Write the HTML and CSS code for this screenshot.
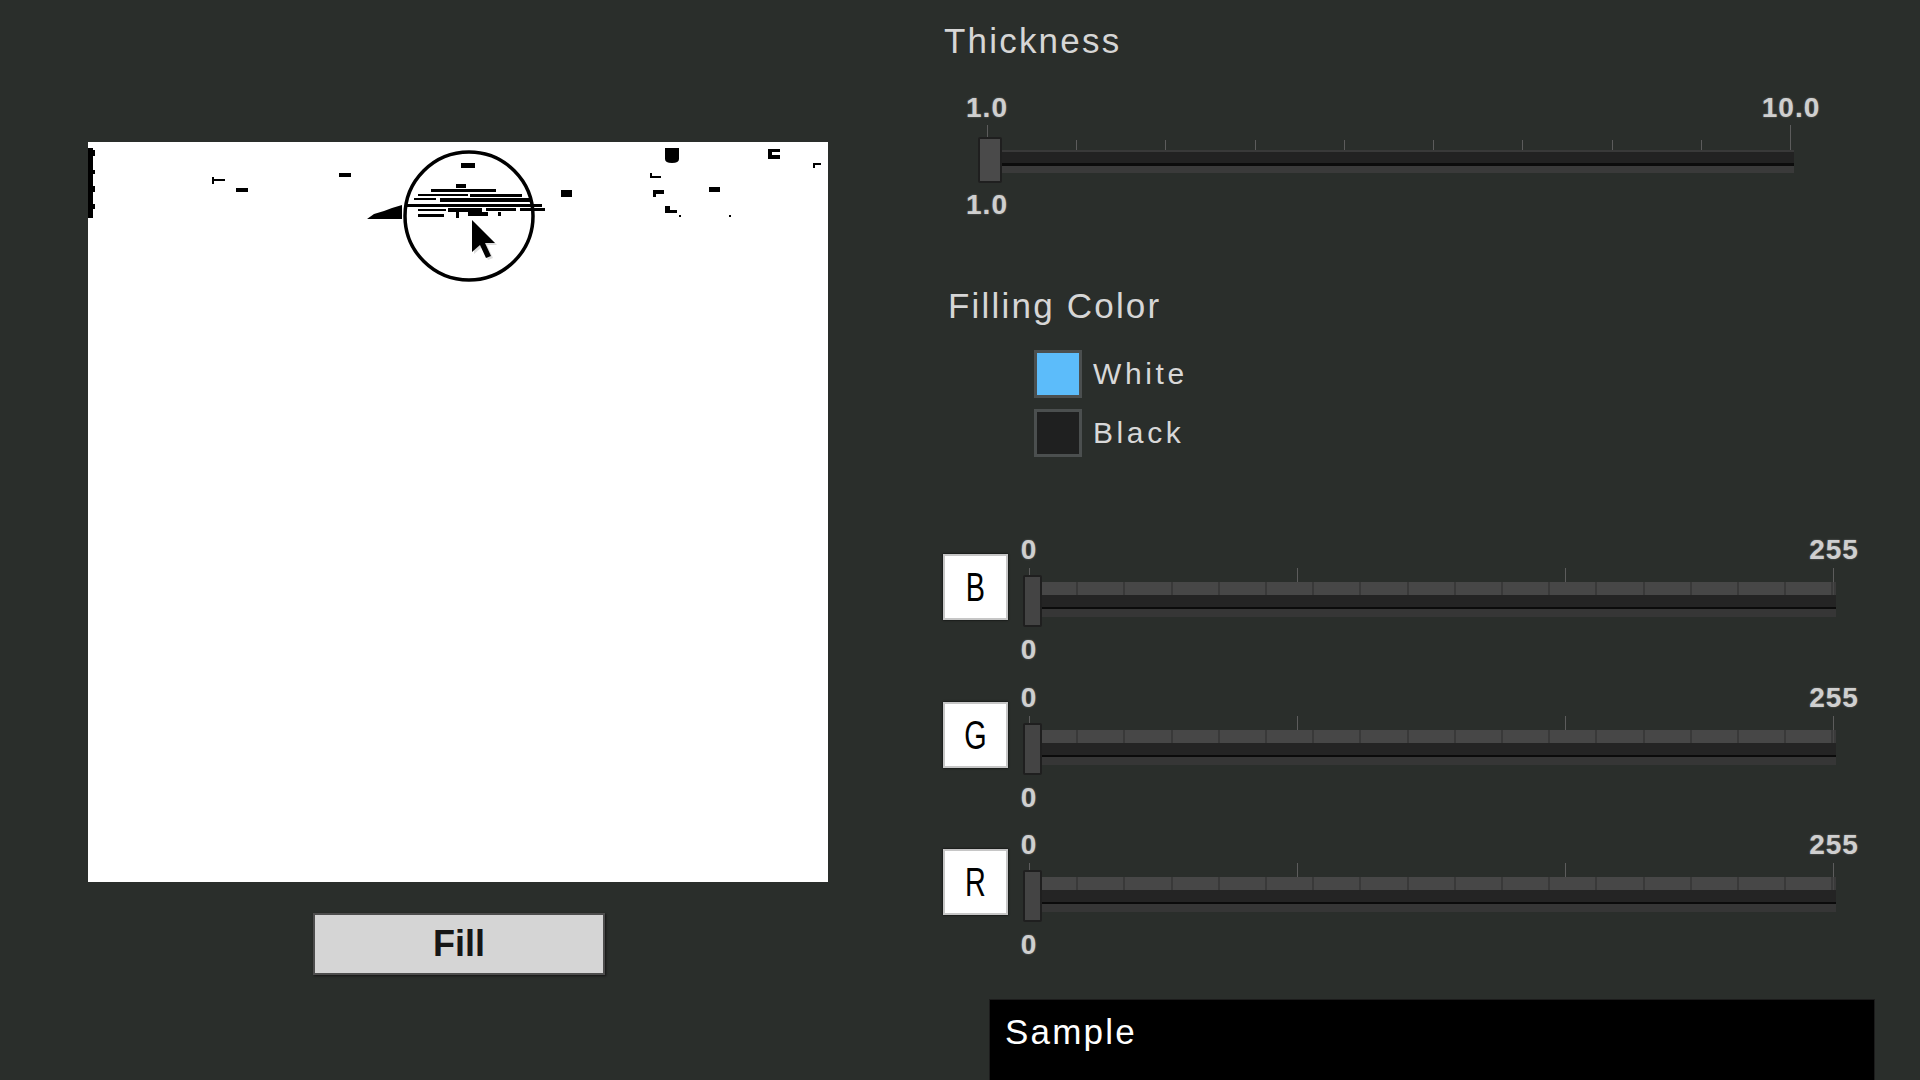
FILE: index.html
```html
<!DOCTYPE html>
<html>
<head>
<meta charset="utf-8">
<title>Fill</title>
<link rel="stylesheet" href="styles.css">
</head>
<body>
<div class="app">
  <section class="left">
    <div class="canvas">
      <svg width="740" height="740" viewBox="0 0 740 740">
        <g fill="#000">
          <rect x="0" y="6" width="5" height="70"/>
          <rect x="5" y="8" width="2" height="6"/>
          <rect x="5" y="28" width="2" height="4"/>
          <rect x="5" y="44" width="2" height="6"/>
          <rect x="5" y="62" width="2" height="5"/>
          <rect x="124" y="35" width="2" height="7"/>
          <rect x="126" y="37" width="11" height="2"/>
          <rect x="148" y="46" width="12" height="4"/>
          <rect x="251" y="31" width="12" height="4"/>
          <rect x="373" y="21" width="14" height="5"/>
          <rect x="368" y="42" width="10" height="4"/>
          <rect x="343" y="47" width="65" height="3"/>
          <rect x="330" y="52" width="50" height="2"/>
          <rect x="382" y="52" width="52" height="3"/>
          <rect x="326" y="56" width="22" height="2"/>
          <rect x="352" y="56" width="92" height="4"/>
          <rect x="318" y="62" width="136" height="3"/>
          <polygon points="279,77 286,72 296,69 304,66 314,63 314,77"/>
          <rect x="330" y="67" width="28" height="2"/>
          <rect x="360" y="66" width="34" height="4"/>
          <rect x="398" y="66" width="30" height="3"/>
          <rect x="330" y="72" width="26" height="3"/>
          <rect x="368" y="70" width="3" height="6"/>
          <rect x="380" y="70" width="20" height="4"/>
          <rect x="410" y="70" width="3" height="4"/>
          <rect x="432" y="66" width="25" height="3"/>
          <rect x="473" y="48" width="11" height="7"/>
          <path d="M577 6 H591 V17 Q591 21 584 21 Q577 21 577 17 Z"/>
          <rect x="680" y="7" width="12" height="10"/>
          <rect x="562" y="31" width="2" height="4"/>
          <rect x="562" y="34" width="11" height="2"/>
          <rect x="565" y="48" width="11" height="4"/>
          <rect x="565" y="48" width="3" height="7"/>
          <rect x="621" y="45" width="11" height="5"/>
          <rect x="577" y="64" width="5" height="7"/>
          <rect x="577" y="68" width="12" height="3"/>
          <rect x="591" y="73" width="2" height="2"/>
          <rect x="641" y="73" width="2" height="2"/>
          <rect x="725" y="21" width="8" height="2"/>
          <rect x="725" y="21" width="2" height="5"/>
        </g>
        <rect x="684" y="10" width="8" height="3" fill="#fff"/>
        <ellipse cx="381" cy="74" rx="64" ry="64" fill="none" stroke="#000" stroke-width="3.5"/>
        <path d="M386 80 L386 112 L394 105 L400 118 L405 116 L399 103 L409 103 Z" fill="#bbb" opacity="0.5"/>
        <path d="M384 78 L384 110 L392 103 L398 116 L403 114 L397 101 L407 101 Z" fill="#000"/>
      </svg>
    </div>
    <button class="fill-btn">Fill</button>
  </section>

  <section class="right">
    <div class="heading thickness-title">Thickness</div>
    <div class="slider thick">
      <div class="ends"><span>1.0</span><span>10.0</span></div>
      <div class="ticks">
        <i class="tick end"></i><i class="tick"></i><i class="tick"></i><i class="tick"></i><i class="tick"></i>
        <i class="tick"></i><i class="tick"></i><i class="tick"></i><i class="tick"></i><i class="tick end"></i>
      </div>
      <div class="track"><div class="thumb"></div></div>
      <div class="ends low"><span>1.0</span></div>
    </div>

    <div class="heading fill-title">Filling Color</div>
    <div class="swatches">
      <div class="swatch-row"><span class="swatch blue"></span><span class="swatch-label">White</span></div>
      <div class="swatch-row"><span class="swatch dark"></span><span class="swatch-label">Black</span></div>
    </div>

    <div class="channels">
      <div class="channel">
        <div class="chan-box"><span>B</span></div>
        <div class="slider rgb">
          <div class="ends"><span>0</span><span>255</span></div>
          <div class="ticks"><i class="tick"></i><i class="tick"></i><i class="tick"></i><i class="tick"></i></div>
          <div class="track"><div class="seg"></div><div class="thumb"></div></div>
          <div class="ends low"><span>0</span></div>
        </div>
      </div>
      <div class="channel">
        <div class="chan-box"><span>G</span></div>
        <div class="slider rgb">
          <div class="ends"><span>0</span><span>255</span></div>
          <div class="ticks"><i class="tick"></i><i class="tick"></i><i class="tick"></i><i class="tick"></i></div>
          <div class="track"><div class="seg"></div><div class="thumb"></div></div>
          <div class="ends low"><span>0</span></div>
        </div>
      </div>
      <div class="channel">
        <div class="chan-box"><span>R</span></div>
        <div class="slider rgb">
          <div class="ends"><span>0</span><span>255</span></div>
          <div class="ticks"><i class="tick"></i><i class="tick"></i><i class="tick"></i><i class="tick"></i></div>
          <div class="track"><div class="seg"></div><div class="thumb"></div></div>
          <div class="ends low"><span>0</span></div>
        </div>
      </div>
    </div>

    <div class="sample">Sample</div>
  </section>
</div>
</body>
</html>
```

FILE: styles.css
```css
html, body {
  margin: 0;
  height: 100%;
}
body {
  background: #2a2e2b;
  overflow: hidden;
  font-family: "Liberation Sans", Arial, sans-serif;
  color: #d4d4d4;
}
.app {
  display: flex;
  width: 1920px;
  height: 1080px;
}

/* left */
.left {
  width: 943px;
  flex: none;
  box-sizing: border-box;
  padding: 142px 0 0 88px;
  display: flex;
  flex-direction: column;
  align-items: flex-start;
}
.canvas {
  width: 740px;
  height: 740px;
  background: #fff;
}
.canvas svg { display: block; }
.fill-btn {
  margin: 31px 0 0 225px;
  width: 292px;
  height: 62px;
  padding: 0;
  background: #d5d5d5;
  border: 2px solid #4d4d4d;
  box-shadow: 1px 1px 2px #151515;
  font: bold 36px/1 "Liberation Sans", Arial, sans-serif;
  color: #161616;
}

/* right */
.right {
  flex: 1;
  padding-top: 23px;
  display: flex;
  flex-direction: column;
  align-items: flex-start;
}
.heading {
  font-size: 35px;
  line-height: 35px;
  height: 35px;
  letter-spacing: 2.2px;
  color: #d6d6d6;
  white-space: nowrap;
}
.thickness-title { margin-left: 1px; }
.fill-title { margin: 69px 0 0 5px; }

.slider {
  display: flex;
  flex-direction: column;
}
.ends {
  display: flex;
  justify-content: space-between;
  height: 28px;
  font: bold 28px/28px "Liberation Sans", Arial, sans-serif;
  letter-spacing: 1px;
  color: #cfcfcf;
  text-shadow: 0 0 2px rgba(255, 255, 255, 0.35);
}
.ends span {
  width: 0;
  display: flex;
  justify-content: center;
  white-space: nowrap;
}
.ticks {
  display: flex;
  justify-content: space-between;
  align-items: flex-end;
}
.tick {
  display: block;
  width: 1px;
  background: #5c5c5c;
}
.track { position: relative; }
.thumb {
  position: absolute;
  box-sizing: border-box;
  background: #4a4a4a;
  border: 2px solid #1f1f1f;
  border-radius: 2px;
}

/* thickness slider */
.slider.thick {
  margin: 36px 0 0 44px;
  width: 804px;
}
.thick .ticks { height: 28px; }
.thick .tick { height: 10px; }
.thick .tick.end { height: 25px; }
.thick .track {
  height: 23px;
  margin: 0 -3px 0 -8px;
  background: linear-gradient(#393939 0 2px, #222222 2px 13px, #0c0c0c 13px 16px, #3a3a3a 16px 23px);
}
.thick .thumb {
  left: -1px;
  top: -13px;
  width: 24px;
  height: 46px;
}
.thick .ends.low { margin-top: 18px; }

/* swatches */
.swatches {
  margin: 27px 0 0 91px;
  display: flex;
  flex-direction: column;
  gap: 11px;
}
.swatch-row {
  display: flex;
  align-items: center;
  gap: 11px;
  height: 48px;
}
.swatch {
  width: 48px;
  height: 48px;
  box-sizing: border-box;
  border: 3px solid #4b4f4f;
}
.swatch.blue { background: #5cbcfa; }
.swatch.dark { background: #1f2020; }
.swatch-label {
  font-size: 30px;
  letter-spacing: 3.6px;
  color: #d8d8d8;
}

/* rgb channels */
.channels {
  margin-top: 79px;
  display: flex;
  flex-direction: column;
  gap: 19.5px;
}
.channel {
  display: flex;
  height: 128px;
}
.chan-box {
  width: 65px;
  height: 66px;
  margin-top: 18px;
  box-sizing: border-box;
  background: #fff;
  border: 2px solid #c6c6c6;
  box-shadow: 0 0 2px #000;
  display: flex;
  align-items: center;
  justify-content: center;
}
.chan-box span {
  display: inline-block;
  font-size: 40px;
  line-height: 1;
  color: #000;
  transform: scaleX(0.72);
}
.slider.rgb {
  margin-left: 21px;
  width: 805px;
}
.rgb .ticks { height: 18px; }
.rgb .tick { height: 14px; }
.rgb .track {
  height: 35px;
  margin-left: 2px;
  margin-right: -2px;
  background: linear-gradient(#3a3a3a 0 13px, #242424 13px 25px, #0b0b0b 25px 27px, #363636 27px 35px);
}
.rgb .seg {
  height: 13px;
  margin-right: 2px;
  background: repeating-linear-gradient(90deg, #474747 0 45.2px, #393939 45.2px 47.2px);
}
.rgb .thumb {
  left: -8px;
  top: -7px;
  width: 19px;
  height: 52px;
  background: #444;
}
.rgb .ends.low { margin-top: 19px; }

/* sample */
.sample {
  margin: 40px 0 0 46px;
  width: 886px;
  height: 120px;
  flex: none;
  box-sizing: border-box;
  padding: 14px 0 0 15px;
  background: #000;
  border: 1px solid #1c1c1c;
  font-size: 35px;
  line-height: 35px;
  letter-spacing: 2.2px;
  color: #fff;
}
```
